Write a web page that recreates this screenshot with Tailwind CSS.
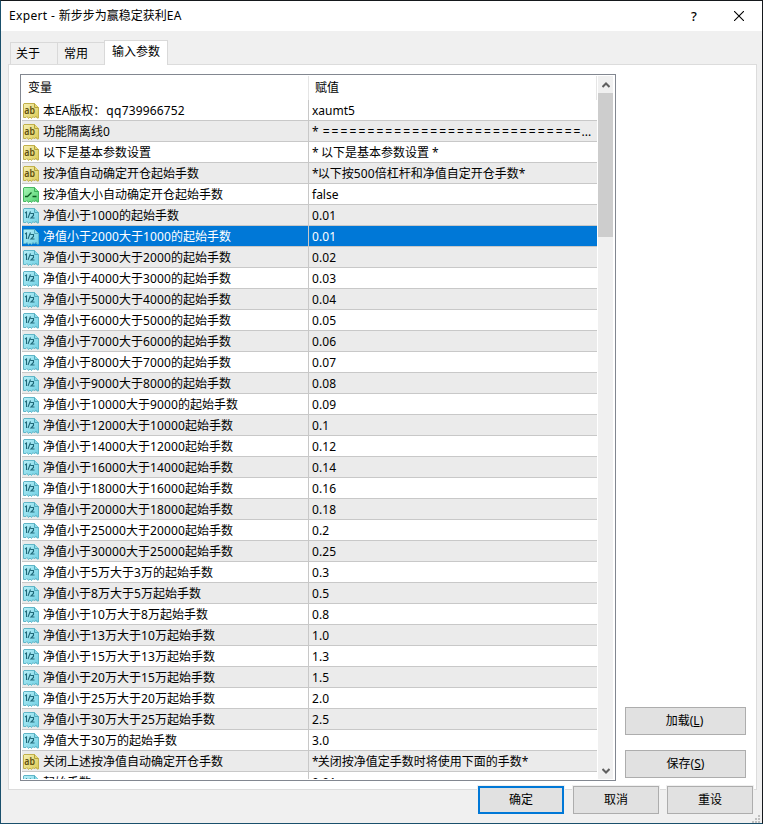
<!DOCTYPE html>
<html lang="zh-CN">
<head>
<meta charset="utf-8">
<title>Expert</title>
<script src="https://cdn.jsdelivr.net/npm/@tailwindcss/browser@4"></script>
</head>
<body class="w-[763px] h-[824px] overflow-hidden bg-[#f0f0f0] text-[12px] leading-[20px] text-black font-['Noto_Sans','Noto_Sans_CJK_SC',sans-serif]">
<svg class="absolute w-0 h-0">
  <defs>
    <linearGradient id="gy" x1="0" y1="0" x2="1" y2="1"><stop offset="0" stop-color="#f6f0b4"/><stop offset="1" stop-color="#dccb55"/></linearGradient>
    <linearGradient id="gg" x1="0" y1="0" x2="1" y2="1"><stop offset="0" stop-color="#a8f5b4"/><stop offset="1" stop-color="#52d272"/></linearGradient>
    <linearGradient id="gb" x1="0" y1="0" x2="1" y2="1"><stop offset="0" stop-color="#b9f0f8"/><stop offset="1" stop-color="#6fcfe3"/></linearGradient>
  </defs>
</svg>
<svg class="hidden">
  <symbol id="ab" viewBox="0 0 16 16">
    <path d="M1 .5h10.500l4 4v10.500h-1.500l-1-2-1.500 2-1.500-1.500-1.500 2-1.500-1.500-1.500 1.500-1.500-2-1 1h-2.500v-13.500z" fill="url(#gy)" stroke="#c2b14a"/>
    <path d="M11.500.5v4h4" fill="#e6d977" stroke="#b3a13c"/>
    <text x="1.300" y="11" font-size="10" font-weight="600" textLength="10.700" lengthAdjust="spacingAndGlyphs" fill="#5e4f0e">ab</text>
  </symbol>
  <symbol id="bool" viewBox="0 0 16 16">
    <path d="M1 .5h10.500l4 4v10.500h-1.500l-1-2-1.500 2-1.500-1.500-1.500 2-1.500-1.500-1.500 1.500-1.500-2-1 1h-2.500v-13.500z" fill="url(#gg)" stroke="#48b862"/>
    <path d="M11.500.5v4h4" fill="#7be58e" stroke="#3fae59"/>
    <path d="M2 9.500h2.500l4-4M9.500 9.500h4" fill="none" stroke="#0c5a20" stroke-width="1.300"/>
  </symbol>
  <symbol id="num" viewBox="0 0 16 16">
    <path d="M1 .5h10.500l4 4v10.500h-1.500l-1-2-1.500 2-1.500-1.500-1.500 2-1.500-1.500-1.500 1.500-1.500-2-1 1h-2.500v-13.500z" fill="url(#gb)" stroke="#5fb6c8"/>
    <path d="M11.500.5v4h4" fill="#8bdbe9" stroke="#55abbd"/>
    <path d="M2 5l1.500-1v6M7.500 3.500l-2.500 6.500M7.500 5.500h3v2l-2.500 2.500h3.500" fill="none" stroke="#1f6878" stroke-width="1.100"/>
  </symbol>
</svg>
<div class="w-full h-full border border-t-[#15181c] border-r-[#15181c] border-l-[#1a506c] border-b-[#1a506c] flex flex-col">
  <header class="h-[30px] bg-white flex items-center shrink-0 pl-2">
    <span class="grow"><span class="tracking-[0.35px]">Expert - </span>新步步为赢稳定获利<span class="tracking-[0.3px]">EA</span></span>
    <span class="w-[12px] mr-[34px] text-center text-[13px] font-medium">?</span>
    <svg class="w-[10px] h-[10px] mr-[18px]" viewBox="0 0 10 10"><path d="M0 0L10 10M10 0L0 10" stroke="#000" stroke-width="1.100"/></svg>
  </header>
  <nav class="flex items-end h-[33px] pl-[9px] shrink-0">
    <div class="w-[48px] h-[22px] border border-b-0 border-[#d9d9d9] pl-[5px] leading-[22px]">关于</div>
    <div class="w-[47px] h-[22px] border border-x-0 border-b-0 border-[#d9d9d9] pl-[6px] leading-[22px]">常用</div>
    <div class="w-[64px] h-[25px] -ml-px -mb-px relative z-10 border border-b-0 border-[#d9d9d9] bg-white pl-[7px] leading-[22px]">输入参数</div>
  </nav>
  <main class="ml-[7px] w-[749px] h-[726px] shrink-0 bg-white border border-[#dcdcdc] flex pl-[11px] pt-[9px]">
    <section class="w-[596px] h-[707px] border border-[#828790] p-px flex shrink-0">
      <div class="w-[575px] h-[703px] overflow-hidden">
        <div class="flex h-[24px] leading-[24px]">
          <div class="w-[287px] border-r border-[#e5e5e5] pl-[6px]">变量</div>
          <div class="w-[288px] border-r border-[#e5e5e5] pl-[6px]">赋值</div>
        </div>
        <div id="rows"></div>
      </div>
      <div class="w-[15px] ml-px bg-[#f0f0f0] flex flex-col items-center">
        <div class="h-[17px] flex items-center shrink-0"><svg class="w-[8px] h-[6px]" viewBox="0 0 8 6"><path d="M.5 5L4 1.500 7.500 5" fill="none" stroke="#606060" stroke-width="2"/></svg></div>
        <div class="w-full h-[144px] bg-[#cdcdcd]"></div>
        <div class="mt-auto h-[17px] flex items-center"><svg class="w-[8px] h-[6px]" viewBox="0 0 8 6"><path d="M.5 1L4 4.500 7.500 1" fill="none" stroke="#606060" stroke-width="2"/></svg></div>
      </div>
    </section>
    <aside class="ml-[9px] pt-[633px] flex flex-col gap-[15px]">
      <button class="w-[121px] h-[28px] border border-[#adadad] bg-[#e1e1e1] pr-[2px]">加载(<u class="underline-offset-1">L</u>)</button>
      <button class="w-[121px] h-[28px] border border-[#adadad] bg-[#e1e1e1]">保存(<u class="underline-offset-1">S</u>)</button>
    </aside>
  </main>
  <footer class="relative z-10 -mt-[5px] flex pl-[476px] gap-[7px] shrink-0">
    <div class="bg-[#f0f0f0] p-px"><button class="block w-[86px] h-[28px] border-2 border-[#0078d7] bg-[#e1e1e1]">确定</button></div>
    <div class="bg-[#f0f0f0] p-px"><button class="block w-[86px] h-[28px] border border-[#adadad] bg-[#e1e1e1]">取消</button></div>
    <div class="bg-[#f0f0f0] p-px -ml-px"><button class="block w-[86px] h-[28px] border border-[#adadad] bg-[#e1e1e1]">重设</button></div>
    <svg class="absolute right-[2px] bottom-[-8px] w-[8px] h-[8px]" viewBox="0 0 8 8" fill="#bfbfbf"><path d="M6 0h2v2h-2zM3 3h2v2h-2zM6 3h2v2h-2zM0 6h2v2h-2zM3 6h2v2h-2zM6 6h2v2h-2z"/></svg>
  </footer>
</div>
<script>
const rows = [
['ab','本EA版权：qq739966752','xaumt5'],
['ab','功能隔离线0','* ============================='],
['ab','以下是基本参数设置','* 以下是基本参数设置 *'],
['ab','按净值自动确定开仓起始手数','*以下按500倍杠杆和净值自定开仓手数*'],
['bool','按净值大小自动确定开仓起始手数','false'],
['num','净值小于1000的起始手数','0.01'],
['num','净值小于2000大于1000的起始手数','0.01'],
['num','净值小于3000大于2000的起始手数','0.02'],
['num','净值小于4000大于3000的起始手数','0.03'],
['num','净值小于5000大于4000的起始手数','0.04'],
['num','净值小于6000大于5000的起始手数','0.05'],
['num','净值小于7000大于6000的起始手数','0.06'],
['num','净值小于8000大于7000的起始手数','0.07'],
['num','净值小于9000大于8000的起始手数','0.08'],
['num','净值小于10000大于9000的起始手数','0.09'],
['num','净值小于12000大于10000起始手数','0.1'],
['num','净值小于14000大于12000起始手数','0.12'],
['num','净值小于16000大于14000起始手数','0.14'],
['num','净值小于18000大于16000起始手数','0.16'],
['num','净值小于20000大于18000起始手数','0.18'],
['num','净值小于25000大于20000起始手数','0.2'],
['num','净值小于30000大于25000起始手数','0.25'],
['num','净值小于5万大于3万的起始手数','0.3'],
['num','净值小于8万大于5万起始手数','0.5'],
['num','净值小于10万大于8万起始手数','0.8'],
['num','净值小于13万大于10万起始手数','1.0'],
['num','净值小于15万大于13万起始手数','1.3'],
['num','净值小于20万大于15万起始手数','1.5'],
['num','净值小于25万大于20万起始手数','2.0'],
['num','净值小于30万大于25万起始手数','2.5'],
['num','净值大于30万的起始手数','3.0'],
['ab','关闭上述按净值自动确定开仓手数','*关闭按净值定手数时将使用下面的手数*'],
['num','起始手数','0.01']];
const spaced = t => t.replace(/[0-9]+/g, m => `<span class="tracking-[0.14px]">${m}</span>`)
  .replace('qq', '<span class="tracking-[0.3px] ml-px">qq</span>')
  .replace(/\*/g, '<span class="tracking-[-0.8px]">*</span>');
document.getElementById('rows').innerHTML = rows.map(([icon, name, value], i) => {
  const tone = i === 6 ? 'bg-[#0078d7] text-white' : i % 2 ? 'bg-[#ebebeb]' : 'bg-white';
  const val = i === 1 ? `*<span class="tracking-[2.1px] ml-[4px]">${value.slice(2)}</span><span class="-ml-px">...</span>` : spaced(value);
  return `<div class="flex h-[21px] border-b border-[#c8c8c8] whitespace-nowrap leading-[22px] ${tone}">
    <div class="w-[287px] border-r border-[#c8c8c8] flex items-start pl-px"><svg class="w-[16px] h-[16px] mt-[3px] mr-[4px] shrink-0"><use href="#${icon}"/></svg><span>${spaced(name)}</span></div>
    <div class="pl-[3px]">${val}</div></div>`;
}).join('');
</script>
</body>
</html>
